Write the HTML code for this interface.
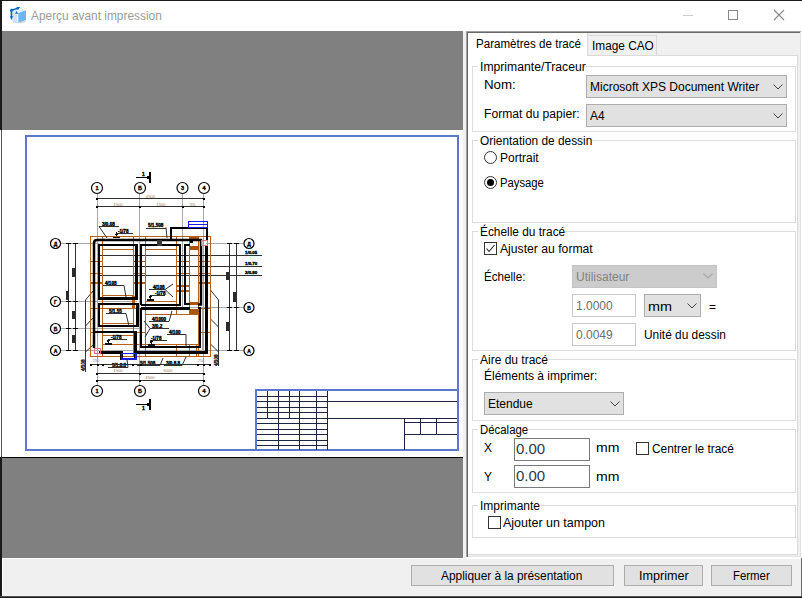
<!DOCTYPE html>
<html><head><meta charset="utf-8">
<style>
html,body{margin:0;padding:0;}
body{width:802px;height:598px;overflow:hidden;position:relative;background:#f0f0f0;font-family:"Liberation Sans",sans-serif;}
.a{position:absolute;box-sizing:border-box;}
.t{position:absolute;font-size:12px;line-height:14px;white-space:nowrap;color:#000;transform-origin:0 0;}
.grp{position:absolute;box-sizing:border-box;border:1px solid #dcdcdc;}
.cb{position:absolute;box-sizing:border-box;background:#e1e1e1;border:1px solid #adadad;}
.chev{position:absolute;width:10px;height:6px;}
.box{position:absolute;box-sizing:border-box;width:13px;height:13px;border:1px solid #333;background:#fff;}
</style></head><body>
<!-- window frame -->
<div class="a" style="left:0;top:0;width:802px;height:1px;background:#1a1a1a"></div>
<div class="a" style="left:0;top:1px;width:802px;height:30px;background:#fff"></div>
<div class="a" style="left:0;top:0;width:2px;height:598px;background:#1a1a1a"></div>
<!-- title icon -->
<svg class="a" style="left:6px;top:4px" width="24" height="22" viewBox="6 4 24 22">
 <ellipse cx="19" cy="21.5" rx="7" ry="1.6" fill="#d8d8d8"/>
 <polygon points="17.8,13 26,10 26,20 17.8,22.5" fill="#6cb6f7"/>
 <polygon points="12,11 17.8,13 17.8,22.5 12,20.3" fill="#cfe6fd"/>
 <polygon points="12,11 20,8.2 26,10 17.8,13" fill="#e8f4ff"/>
 <line x1="17.8" y1="13" x2="17.8" y2="22.5" stroke="#fff" stroke-width="0.9"/>
 <path d="M11.5,10.2 L18,8.3 M11.4,10.2 L11.4,17" stroke="#0b63c9" stroke-width="1.5" fill="none"/>
 <circle cx="11.6" cy="10.2" r="1.5" fill="#0b63c9"/>
 <polygon points="9.8,16.3 13.1,16.3 11.4,20" fill="#0b63c9"/>
 <polygon points="15,13.8 18.1,13.8 16.6,10.9" fill="#0b63c9"/>
 <polygon points="16.4,6.9 20.3,7.1 17.9,9.9" fill="#0b63c9"/>
</svg>
<div class="t" style="left:31px;top:9px;color:#9c9c9c;transform:scaleX(0.99)">Aperçu avant impression</div>
<!-- window buttons -->
<div class="a" style="left:683px;top:15px;width:10px;height:1px;background:#d0d0d0"></div>
<div class="a" style="left:728px;top:10px;width:10px;height:10px;border:1px solid #8a8a8a"></div>
<svg class="a" style="left:773px;top:9px" width="12" height="12" viewBox="0 0 12 12"><path d="M1,1 L11,11 M11,1 L1,11" stroke="#8a8a8a" stroke-width="1.1"/></svg>

<!-- preview area -->
<div class="a" style="left:2px;top:31px;width:461px;height:99px;background:#808080"></div>
<div class="a" style="left:2px;top:130px;width:461px;height:327px;background:#fff"></div>
<div class="a" style="left:2px;top:457px;width:461px;height:1px;background:#000"></div>
<div class="a" style="left:2px;top:458px;width:461px;height:100px;background:#808080"></div>
<div class="a" style="left:1px;top:130px;width:1px;height:327px;background:#555"></div>
<div class="a" style="left:0px;top:130px;width:1px;height:327px;background:#fff"></div>
<!-- paper border -->
<div class="a" style="left:25px;top:135px;width:434px;height:316px;border:2px solid #5a78cc"></div>

<!-- drawing -->
<svg class="a" style="left:2px;top:130px" width="461" height="327" viewBox="2 130 461 327" shape-rendering="crispEdges">
<line x1="97.5" y1="193.5" x2="97.5" y2="386" stroke="#a8a8a8" stroke-width="1"/>
<line x1="139.5" y1="193.5" x2="139.5" y2="386" stroke="#a8a8a8" stroke-width="1"/>
<line x1="203.5" y1="193.5" x2="203.5" y2="386" stroke="#a8a8a8" stroke-width="1"/>
<line x1="182.5" y1="193.5" x2="182.5" y2="307" stroke="#a8a8a8" stroke-width="1"/>
<line x1="61" y1="243.5" x2="99" y2="243.5" stroke="#a8a8a8" stroke-width="1"/>
<line x1="206" y1="243.5" x2="244" y2="243.5" stroke="#a8a8a8" stroke-width="1"/>
<line x1="61" y1="301.5" x2="137" y2="301.5" stroke="#a8a8a8" stroke-width="1"/>
<line x1="61" y1="328.5" x2="142" y2="328.5" stroke="#a8a8a8" stroke-width="1"/>
<line x1="61" y1="350.5" x2="244" y2="350.5" stroke="#a8a8a8" stroke-width="1"/>
<line x1="142" y1="307.5" x2="244" y2="307.5" stroke="#a8a8a8" stroke-width="1"/>
<line x1="202.5" y1="307" x2="202.5" y2="352" stroke="#a8a8a8" stroke-width="1"/>
<line x1="96" y1="198.5" x2="205" y2="198.5" stroke="#303030" stroke-width="1"/>
<line x1="96" y1="206.5" x2="205" y2="206.5" stroke="#303030" stroke-width="1"/>
<rect x="96" y="205.5" width="2" height="2" fill="#000"/>
<rect x="139" y="205.5" width="2" height="2" fill="#000"/>
<rect x="181.5" y="205.5" width="2" height="2" fill="#000"/>
<rect x="203" y="205.5" width="2" height="2" fill="#000"/>
<rect x="96" y="197.5" width="2" height="2" fill="#000"/>
<rect x="203" y="197.5" width="2" height="2" fill="#000"/>
<text x="150.5" y="197.5" font-family="Liberation Sans" font-size="4.2" font-weight="normal" fill="#a08060" text-anchor="middle">4500</text>
<text x="118" y="205.5" font-family="Liberation Sans" font-size="4.2" font-weight="normal" fill="#a08060" text-anchor="middle">1500</text>
<text x="161" y="205.5" font-family="Liberation Sans" font-size="4.2" font-weight="normal" fill="#a08060" text-anchor="middle">1500</text>
<text x="192.5" y="205.5" font-family="Liberation Sans" font-size="4.2" font-weight="normal" fill="#a08060" text-anchor="middle">3/5</text>
<line x1="136" y1="177.5" x2="149" y2="177.5" stroke="#000" stroke-width="1"/>
<rect x="149" y="172" width="2" height="11" fill="#000"/>
<text x="142" y="176" font-family="Liberation Sans" font-size="5" font-weight="bold" fill="#000" text-anchor="start" stroke="#000" stroke-width="0.35">1</text>
<rect x="147" y="176" width="2" height="3" fill="#000"/>
<circle cx="97" cy="188" r="5.5" stroke="#000" stroke-width="1.2" fill="#fff" shape-rendering="auto"/>
<text x="97" y="190" font-family="Liberation Sans" font-size="5.5" font-weight="bold" fill="#000" text-anchor="middle" stroke="#000" stroke-width="0.35">1</text>
<circle cx="140" cy="188" r="5.5" stroke="#000" stroke-width="1.2" fill="#fff" shape-rendering="auto"/>
<text x="140" y="190" font-family="Liberation Sans" font-size="5.5" font-weight="bold" fill="#000" text-anchor="middle" stroke="#000" stroke-width="0.35">Б</text>
<circle cx="182.5" cy="188" r="5.5" stroke="#000" stroke-width="1.2" fill="#fff" shape-rendering="auto"/>
<text x="182.5" y="190" font-family="Liberation Sans" font-size="5.5" font-weight="bold" fill="#000" text-anchor="middle" stroke="#000" stroke-width="0.35">3</text>
<circle cx="204" cy="188" r="5.5" stroke="#000" stroke-width="1.2" fill="#fff" shape-rendering="auto"/>
<text x="204" y="190" font-family="Liberation Sans" font-size="5.5" font-weight="bold" fill="#000" text-anchor="middle" stroke="#000" stroke-width="0.35">4</text>
<line x1="68.5" y1="243" x2="68.5" y2="351" stroke="#303030" stroke-width="1"/>
<line x1="75.5" y1="243" x2="75.5" y2="351" stroke="#303030" stroke-width="1"/>
<line x1="66" y1="243.5" x2="71" y2="243.5" stroke="#000" stroke-width="1"/>
<line x1="73" y1="243.5" x2="78" y2="243.5" stroke="#000" stroke-width="1"/>
<line x1="66" y1="301.5" x2="71" y2="301.5" stroke="#000" stroke-width="1"/>
<line x1="73" y1="301.5" x2="78" y2="301.5" stroke="#000" stroke-width="1"/>
<line x1="66" y1="328.5" x2="71" y2="328.5" stroke="#000" stroke-width="1"/>
<line x1="73" y1="328.5" x2="78" y2="328.5" stroke="#000" stroke-width="1"/>
<line x1="66" y1="350.5" x2="71" y2="350.5" stroke="#000" stroke-width="1"/>
<line x1="73" y1="350.5" x2="78" y2="350.5" stroke="#000" stroke-width="1"/>
<rect x="72" y="268" width="3" height="9" fill="#2a2a2a"/>
<rect x="65.5" y="291" width="3" height="9" fill="#2a2a2a"/>
<rect x="72" y="311" width="3" height="8" fill="#2a2a2a"/>
<rect x="72" y="335" width="3" height="8" fill="#2a2a2a"/>
<circle cx="55.5" cy="243.5" r="5" stroke="#000" stroke-width="1.2" fill="#fff" shape-rendering="auto"/>
<text x="55.5" y="245.5" font-family="Liberation Sans" font-size="5" font-weight="bold" fill="#000" text-anchor="middle" stroke="#000" stroke-width="0.35">Д</text>
<circle cx="55.5" cy="301.5" r="5" stroke="#000" stroke-width="1.2" fill="#fff" shape-rendering="auto"/>
<text x="55.5" y="303.5" font-family="Liberation Sans" font-size="5" font-weight="bold" fill="#000" text-anchor="middle" stroke="#000" stroke-width="0.35">Г</text>
<circle cx="55.5" cy="328.5" r="5" stroke="#000" stroke-width="1.2" fill="#fff" shape-rendering="auto"/>
<text x="55.5" y="330.5" font-family="Liberation Sans" font-size="5" font-weight="bold" fill="#000" text-anchor="middle" stroke="#000" stroke-width="0.35">Б</text>
<circle cx="55.5" cy="350.5" r="5" stroke="#000" stroke-width="1.2" fill="#fff" shape-rendering="auto"/>
<text x="55.5" y="352.5" font-family="Liberation Sans" font-size="5" font-weight="bold" fill="#000" text-anchor="middle" stroke="#000" stroke-width="0.35">А</text>
<line x1="85.5" y1="300" x2="85.5" y2="372" stroke="#303030" stroke-width="1"/>
<path d="M85.5,300 L93,291 M85.5,326 L93,318 M85.5,352 L93,345" stroke="#303030" stroke-width="1" fill="none" shape-rendering="auto"/>
<text x="85" y="371" font-family="Liberation Sans" font-size="4.6" font-weight="bold" fill="#1a1a1a" text-anchor="start" transform="rotate(-90 85 371)" stroke="#1a1a1a" stroke-width="0.35">4/108</text>
<line x1="229.5" y1="243" x2="229.5" y2="351" stroke="#303030" stroke-width="1"/>
<line x1="236.5" y1="243" x2="236.5" y2="351" stroke="#303030" stroke-width="1"/>
<line x1="227" y1="243.5" x2="232" y2="243.5" stroke="#000" stroke-width="1"/>
<line x1="234" y1="243.5" x2="239" y2="243.5" stroke="#000" stroke-width="1"/>
<line x1="227" y1="307.5" x2="232" y2="307.5" stroke="#000" stroke-width="1"/>
<line x1="234" y1="307.5" x2="239" y2="307.5" stroke="#000" stroke-width="1"/>
<line x1="227" y1="350.5" x2="232" y2="350.5" stroke="#000" stroke-width="1"/>
<line x1="234" y1="350.5" x2="239" y2="350.5" stroke="#000" stroke-width="1"/>
<rect x="226" y="272" width="3" height="8" fill="#2a2a2a"/>
<rect x="233" y="292" width="3" height="10" fill="#2a2a2a"/>
<rect x="226" y="322" width="3" height="9" fill="#2a2a2a"/>
<circle cx="249" cy="243.5" r="5" stroke="#000" stroke-width="1.2" fill="#fff" shape-rendering="auto"/>
<text x="249" y="245.5" font-family="Liberation Sans" font-size="5" font-weight="bold" fill="#000" text-anchor="middle" stroke="#000" stroke-width="0.35">Д</text>
<circle cx="249" cy="307.5" r="5" stroke="#000" stroke-width="1.2" fill="#fff" shape-rendering="auto"/>
<text x="249" y="309.5" font-family="Liberation Sans" font-size="5" font-weight="bold" fill="#000" text-anchor="middle" stroke="#000" stroke-width="0.35">В</text>
<circle cx="249" cy="350.5" r="5" stroke="#000" stroke-width="1.2" fill="#fff" shape-rendering="auto"/>
<text x="249" y="352.5" font-family="Liberation Sans" font-size="5" font-weight="bold" fill="#000" text-anchor="middle" stroke="#000" stroke-width="0.35">А</text>
<line x1="98" y1="255.5" x2="262" y2="255.5" stroke="#303030" stroke-width="1"/>
<line x1="98" y1="266.5" x2="262" y2="266.5" stroke="#303030" stroke-width="1"/>
<line x1="98" y1="275.5" x2="262" y2="275.5" stroke="#303030" stroke-width="1"/>
<text x="245" y="254" font-family="Liberation Sans" font-size="4.4" font-weight="bold" fill="#000" text-anchor="start" stroke="#000" stroke-width="0.35">1/0.05</text>
<text x="245" y="265" font-family="Liberation Sans" font-size="4.4" font-weight="bold" fill="#000" text-anchor="start" stroke="#000" stroke-width="0.35">1/0.70</text>
<text x="245" y="274" font-family="Liberation Sans" font-size="4.4" font-weight="bold" fill="#000" text-anchor="start" stroke="#000" stroke-width="0.35">3/0.80</text>
<line x1="218.5" y1="300" x2="218.5" y2="366" stroke="#303030" stroke-width="1"/>
<path d="M210.5,290 L218.5,300 M210.5,319 L218.5,327 M210.5,344 L218.5,352" stroke="#303030" stroke-width="1" fill="none" shape-rendering="auto"/>
<text x="218" y="366" font-family="Liberation Sans" font-size="4.6" font-weight="bold" fill="#1a1a1a" text-anchor="start" transform="rotate(-90 218 366)" stroke="#1a1a1a" stroke-width="0.35">4/108</text>
<rect x="90.5" y="236.5" width="120" height="120" stroke="#b5611c" stroke-width="1" fill="none"/>
<line x1="102.5" y1="236.5" x2="102.5" y2="356.5" stroke="#b5611c" stroke-width="1"/>
<line x1="133.5" y1="236.5" x2="133.5" y2="356.5" stroke="#b5611c" stroke-width="1"/>
<line x1="145.5" y1="236.5" x2="145.5" y2="356.5" stroke="#b5611c" stroke-width="1"/>
<line x1="198.5" y1="236.5" x2="198.5" y2="356.5" stroke="#b5611c" stroke-width="1"/>
<line x1="176.5" y1="236.5" x2="176.5" y2="314.5" stroke="#b5611c" stroke-width="1"/>
<line x1="189.5" y1="236.5" x2="189.5" y2="314.5" stroke="#b5611c" stroke-width="1"/>
<line x1="176.5" y1="344.5" x2="176.5" y2="356.5" stroke="#b5611c" stroke-width="1"/>
<line x1="189.5" y1="344.5" x2="189.5" y2="356.5" stroke="#b5611c" stroke-width="1"/>
<line x1="196.5" y1="344.5" x2="196.5" y2="356.5" stroke="#b5611c" stroke-width="1"/>
<line x1="102.5" y1="249.5" x2="133.5" y2="249.5" stroke="#b5611c" stroke-width="1"/>
<line x1="145.5" y1="249.5" x2="176.5" y2="249.5" stroke="#b5611c" stroke-width="1"/>
<line x1="90.5" y1="261.5" x2="102.5" y2="261.5" stroke="#b5611c" stroke-width="1"/>
<line x1="90.5" y1="273.5" x2="102.5" y2="273.5" stroke="#b5611c" stroke-width="1"/>
<rect x="90.5" y="281.5" width="12.0" height="2.5" fill="#b5611c"/>
<line x1="133.5" y1="261.5" x2="145.5" y2="261.5" stroke="#b5611c" stroke-width="1"/>
<line x1="133.5" y1="273.5" x2="145.5" y2="273.5" stroke="#b5611c" stroke-width="1"/>
<rect x="133.5" y="281.5" width="12.0" height="2.5" fill="#b5611c"/>
<line x1="198.5" y1="261.5" x2="210.5" y2="261.5" stroke="#b5611c" stroke-width="1"/>
<line x1="198.5" y1="273.5" x2="210.5" y2="273.5" stroke="#b5611c" stroke-width="1"/>
<rect x="198.5" y="281.5" width="12.0" height="2.5" fill="#b5611c"/>
<line x1="176.5" y1="261.5" x2="189.5" y2="261.5" stroke="#b5611c" stroke-width="1"/>
<line x1="176.5" y1="273.5" x2="189.5" y2="273.5" stroke="#b5611c" stroke-width="1"/>
<rect x="176.5" y="284.5" width="13" height="2" fill="#b5611c"/>
<rect x="176.5" y="289.5" width="13" height="2" fill="#b5611c"/>
<line x1="102.5" y1="295.5" x2="133.5" y2="295.5" stroke="#b5611c" stroke-width="1"/>
<line x1="90.5" y1="308.5" x2="145.5" y2="308.5" stroke="#b5611c" stroke-width="1"/>
<line x1="198.5" y1="308.5" x2="210.5" y2="308.5" stroke="#b5611c" stroke-width="1"/>
<line x1="145.5" y1="301.5" x2="176.5" y2="301.5" stroke="#b5611c" stroke-width="1"/>
<line x1="145.5" y1="314.5" x2="198.5" y2="314.5" stroke="#b5611c" stroke-width="1"/>
<line x1="102.5" y1="323.5" x2="133.5" y2="323.5" stroke="#b5611c" stroke-width="1"/>
<line x1="90.5" y1="332.5" x2="145.5" y2="332.5" stroke="#b5611c" stroke-width="1"/>
<line x1="198.5" y1="332.5" x2="210.5" y2="332.5" stroke="#b5611c" stroke-width="1"/>
<line x1="102.5" y1="335.5" x2="133.5" y2="335.5" stroke="#b5611c" stroke-width="1"/>
<line x1="102.5" y1="344.5" x2="198.5" y2="344.5" stroke="#b5611c" stroke-width="1"/>
<rect x="132" y="296" width="2.5" height="12" fill="#b5611c"/>
<rect x="189.5" y="236.5" width="9" height="3" fill="#a8560f"/>
<rect x="189.5" y="246" width="9" height="3.5" fill="#a8560f"/>
<rect x="189.5" y="301.5" width="9" height="3.5" fill="#a8560f"/>
<rect x="189.5" y="309" width="9" height="4.5" fill="#a8560f"/>
<path d="M94,348 L94,243 Q94,240 97,240 L201,240 L201,304.5 L198,304.5" stroke="#000" stroke-width="2.5" fill="none" shape-rendering="auto"/>
<path d="M206.5,245 L206.5,352.5 L137,352.5" stroke="#000" stroke-width="3" fill="none"/>
<path d="M121.5,359.5 L121.5,352.5 L99,352.5" stroke="#000" stroke-width="2.5" fill="none"/>
<path d="M94,332 L135.7,332 L135.7,360" stroke="#000" stroke-width="2.5" fill="none"/>
<rect x="99" y="245" width="37.6" height="53.6" stroke="#000" stroke-width="2.5" fill="none"/>
<path d="M141,305 L141,245 L180,245 L180,305 L141,305" stroke="#000" stroke-width="2.5" fill="none"/>
<path d="M189.5,245 L185,245 L185,304 L190,304" stroke="#000" stroke-width="2.5" fill="none"/>
<rect x="189.5" y="239.5" width="3.5" height="3" fill="#000"/>
<path d="M141,308.6 L190,308.6" stroke="#000" stroke-width="3" fill="none"/>
<rect x="99" y="304" width="38.5" height="22" stroke="#000" stroke-width="2.5" fill="none"/>
<path d="M141,308 L141,347 L200,347 L200,308 L198,308" stroke="#000" stroke-width="2.5" fill="none"/>
<path d="M171,240 L171,228 L207,228 L207,240" stroke="#000" stroke-width="2" fill="none"/>
<rect x="157" y="240" width="4.5" height="6" fill="#3a3a3a"/>
<rect x="188.5" y="221.5" width="19" height="6" stroke="#1a1aee" stroke-width="1.2" fill="none"/>
<line x1="188.5" y1="224.5" x2="207.5" y2="224.5" stroke="#1a1aee" stroke-width="1.2"/>
<rect x="121.5" y="353.5" width="14.5" height="5.5" stroke="#1a1aee" stroke-width="1.2" fill="none"/>
<rect x="201.5" y="240.5" width="6" height="5" stroke="#e07080" stroke-width="1" fill="none"/>
<rect x="94.5" y="348.5" width="5.5" height="5" stroke="#e07080" stroke-width="1" fill="none"/>
<text x="102" y="225.5" font-family="Liberation Sans" font-size="4.6" font-weight="bold" fill="#000" text-anchor="start" stroke="#000" stroke-width="0.35">3/0.08</text>
<line x1="99" y1="226.5" x2="119" y2="226.5" stroke="#303030" stroke-width="1"/>
<path d="M99,226.5 L107,238" stroke="#303030" stroke-width="1" fill="none" shape-rendering="auto"/>
<text x="118" y="232.5" font-family="Liberation Sans" font-size="4.6" font-weight="bold" fill="#000" text-anchor="start" stroke="#000" stroke-width="0.35">-1/78</text>
<line x1="116" y1="233.5" x2="133" y2="233.5" stroke="#303030" stroke-width="1"/>
<rect x="113" y="236.5" width="7" height="1.5" fill="#111"/>
<path d="M114.5,233.5 L118.5,233.5 L116.5,236.5 Z" fill="#111"/>
<line x1="116.5" y1="232.0" x2="116.5" y2="233.5" stroke="#111" stroke-width="1"/>
<text x="148" y="227.0" font-family="Liberation Sans" font-size="4.6" font-weight="bold" fill="#000" text-anchor="start" stroke="#000" stroke-width="0.35">5/1.508</text>
<line x1="146" y1="228.0" x2="166" y2="228.0" stroke="#303030" stroke-width="1"/>
<path d="M166,227.5 L167,238" stroke="#303030" stroke-width="1" fill="none" shape-rendering="auto"/>
<text x="105" y="284.5" font-family="Liberation Sans" font-size="4.6" font-weight="bold" fill="#000" text-anchor="start" stroke="#000" stroke-width="0.35">4/108</text>
<line x1="103" y1="285.5" x2="124" y2="285.5" stroke="#303030" stroke-width="1"/>
<path d="M124,285.5 L126,297" stroke="#303030" stroke-width="1" fill="none" shape-rendering="auto"/>
<text x="109" y="312.5" font-family="Liberation Sans" font-size="4.6" font-weight="bold" fill="#000" text-anchor="start" stroke="#000" stroke-width="0.35">5/1.55</text>
<line x1="106" y1="313.5" x2="126" y2="313.5" stroke="#303030" stroke-width="1"/>
<path d="M126,313.5 L129,326" stroke="#303030" stroke-width="1" fill="none" shape-rendering="auto"/>
<text x="153" y="288.5" font-family="Liberation Sans" font-size="4.6" font-weight="bold" fill="#000" text-anchor="start" stroke="#000" stroke-width="0.35">4/108</text>
<line x1="149" y1="289.5" x2="165" y2="289.5" stroke="#303030" stroke-width="1"/>
<path d="M165,289.5 L173,284 M165,289.5 L173,297" stroke="#303030" stroke-width="1" fill="none" shape-rendering="auto"/>
<text x="155" y="294.5" font-family="Liberation Sans" font-size="4.6" font-weight="bold" fill="#000" text-anchor="start" stroke="#000" stroke-width="0.35">-1/78</text>
<line x1="151" y1="295.5" x2="165" y2="295.5" stroke="#303030" stroke-width="1"/>
<rect x="147" y="299" width="7" height="1.5" fill="#111"/>
<path d="M148.5,296 L152.5,296 L150.5,299 Z" fill="#111"/>
<line x1="150.5" y1="294.5" x2="150.5" y2="296" stroke="#111" stroke-width="1"/>
<text x="111" y="338.5" font-family="Liberation Sans" font-size="4.6" font-weight="bold" fill="#000" text-anchor="start" stroke="#000" stroke-width="0.35">-1/78</text>
<line x1="108" y1="339.5" x2="127" y2="339.5" stroke="#303030" stroke-width="1"/>
<rect x="105" y="343" width="7" height="1.5" fill="#111"/>
<path d="M106.5,340 L110.5,340 L108.5,343 Z" fill="#111"/>
<line x1="108.5" y1="338.5" x2="108.5" y2="340" stroke="#111" stroke-width="1"/>
<text x="152" y="320.5" font-family="Liberation Sans" font-size="4.6" font-weight="bold" fill="#000" text-anchor="start" stroke="#000" stroke-width="0.35">4/1000</text>
<line x1="149" y1="321.5" x2="169" y2="321.5" stroke="#303030" stroke-width="1"/>
<path d="M169,321.5 L172,311" stroke="#303030" stroke-width="1" fill="none" shape-rendering="auto"/>
<text x="152" y="327.5" font-family="Liberation Sans" font-size="4.6" font-weight="bold" fill="#000" text-anchor="start" stroke="#000" stroke-width="0.35">3/0.2</text>
<line x1="150" y1="328.5" x2="169" y2="328.5" stroke="#303030" stroke-width="1"/>
<path d="M150,328.5 L144,321 M150,328.5 L145,337" stroke="#303030" stroke-width="1" fill="none" shape-rendering="auto"/>
<text x="169" y="333.5" font-family="Liberation Sans" font-size="4.6" font-weight="bold" fill="#000" text-anchor="start" stroke="#000" stroke-width="0.35">4/100</text>
<line x1="167" y1="334.5" x2="186" y2="334.5" stroke="#303030" stroke-width="1"/>
<path d="M186,334.5 L186,347" stroke="#303030" stroke-width="1" fill="none" shape-rendering="auto"/>
<text x="151" y="339.5" font-family="Liberation Sans" font-size="4.6" font-weight="bold" fill="#000" text-anchor="start" stroke="#000" stroke-width="0.35">-1/78</text>
<line x1="150" y1="340.5" x2="167" y2="340.5" stroke="#303030" stroke-width="1"/>
<rect x="148" y="344" width="7" height="1.5" fill="#111"/>
<path d="M149.5,341 L153.5,341 L151.5,344 Z" fill="#111"/>
<line x1="151.5" y1="339.5" x2="151.5" y2="341" stroke="#111" stroke-width="1"/>
<text x="140" y="364.5" font-family="Liberation Sans" font-size="4.6" font-weight="bold" fill="#000" text-anchor="start" stroke="#000" stroke-width="0.35">5/1.508</text>
<line x1="137" y1="365.5" x2="160" y2="365.5" stroke="#303030" stroke-width="1"/>
<path d="M160,365.5 L163,358" stroke="#303030" stroke-width="1" fill="none" shape-rendering="auto"/>
<text x="166" y="364.5" font-family="Liberation Sans" font-size="4.6" font-weight="bold" fill="#000" text-anchor="start" stroke="#000" stroke-width="0.35">3/0.8.8</text>
<line x1="164" y1="365.5" x2="182" y2="365.5" stroke="#303030" stroke-width="1"/>
<path d="M182,365.5 L186,357" stroke="#303030" stroke-width="1" fill="none" shape-rendering="auto"/>
<text x="112" y="366.5" font-family="Liberation Sans" font-size="4.6" font-weight="bold" fill="#000" text-anchor="start" stroke="#000" stroke-width="0.35">3/1.8.8</text>
<line x1="108" y1="367.5" x2="128" y2="367.5" stroke="#303030" stroke-width="1"/>
<path d="M128,367.5 L127,359" stroke="#303030" stroke-width="1" fill="none" shape-rendering="auto"/>
<line x1="91" y1="364.5" x2="210" y2="364.5" stroke="#303030" stroke-width="1"/>
<rect x="89.5" y="363.5" width="2" height="2" fill="#000"/>
<rect x="96.5" y="363.5" width="2" height="2" fill="#000"/>
<rect x="101.5" y="363.5" width="2" height="2" fill="#000"/>
<rect x="132" y="363.5" width="2" height="2" fill="#000"/>
<rect x="140" y="363.5" width="2" height="2" fill="#000"/>
<rect x="197" y="363.5" width="2" height="2" fill="#000"/>
<rect x="203" y="363.5" width="2" height="2" fill="#000"/>
<rect x="209" y="363.5" width="2" height="2" fill="#000"/>
<line x1="96" y1="373.5" x2="205" y2="373.5" stroke="#303030" stroke-width="1"/>
<line x1="96" y1="380.5" x2="205" y2="380.5" stroke="#303030" stroke-width="1"/>
<rect x="96" y="372.5" width="2" height="2" fill="#000"/>
<rect x="96" y="379.5" width="2" height="2" fill="#000"/>
<rect x="139" y="372.5" width="2" height="2" fill="#000"/>
<rect x="139" y="379.5" width="2" height="2" fill="#000"/>
<rect x="203" y="372.5" width="2" height="2" fill="#000"/>
<rect x="203" y="379.5" width="2" height="2" fill="#000"/>
<text x="118" y="372" font-family="Liberation Sans" font-size="4.2" font-weight="normal" fill="#a08060" text-anchor="middle">1500</text>
<text x="168" y="372" font-family="Liberation Sans" font-size="4.2" font-weight="normal" fill="#a08060" text-anchor="middle">3000</text>
<text x="150" y="379" font-family="Liberation Sans" font-size="4.2" font-weight="normal" fill="#a08060" text-anchor="middle">4500</text>
<text x="96" y="362" font-family="Liberation Sans" font-size="4" font-weight="normal" fill="#8090b0" text-anchor="middle">250</text>
<text x="201" y="362" font-family="Liberation Sans" font-size="4" font-weight="normal" fill="#8090b0" text-anchor="middle">250</text>
<circle cx="97" cy="391" r="5.5" stroke="#000" stroke-width="1.2" fill="#fff" shape-rendering="auto"/>
<text x="97" y="393" font-family="Liberation Sans" font-size="5.5" font-weight="bold" fill="#000" text-anchor="middle" stroke="#000" stroke-width="0.35">1</text>
<circle cx="140" cy="391" r="5.5" stroke="#000" stroke-width="1.2" fill="#fff" shape-rendering="auto"/>
<text x="140" y="393" font-family="Liberation Sans" font-size="5.5" font-weight="bold" fill="#000" text-anchor="middle" stroke="#000" stroke-width="0.35">Б</text>
<circle cx="204" cy="391" r="5.5" stroke="#000" stroke-width="1.2" fill="#fff" shape-rendering="auto"/>
<text x="204" y="393" font-family="Liberation Sans" font-size="5.5" font-weight="bold" fill="#000" text-anchor="middle" stroke="#000" stroke-width="0.35">4</text>
<line x1="136" y1="404.5" x2="149" y2="404.5" stroke="#000" stroke-width="1"/>
<rect x="149" y="399" width="2" height="11" fill="#000"/>
<text x="142" y="410" font-family="Liberation Sans" font-size="5" font-weight="bold" fill="#000" text-anchor="start" stroke="#000" stroke-width="0.35">1</text>
<rect x="147" y="403" width="2" height="3" fill="#000"/>
<line x1="257" y1="396.5" x2="328" y2="396.5" stroke="#1c2440" stroke-width="1"/>
<line x1="257" y1="401.5" x2="328" y2="401.5" stroke="#1c2440" stroke-width="1"/>
<line x1="257" y1="407.5" x2="328" y2="407.5" stroke="#1c2440" stroke-width="1"/>
<line x1="257" y1="412.5" x2="328" y2="412.5" stroke="#1c2440" stroke-width="1"/>
<line x1="257" y1="418.5" x2="328" y2="418.5" stroke="#1c2440" stroke-width="1"/>
<line x1="257" y1="423.5" x2="328" y2="423.5" stroke="#1c2440" stroke-width="1"/>
<line x1="257" y1="429.5" x2="328" y2="429.5" stroke="#1c2440" stroke-width="1"/>
<line x1="257" y1="434.5" x2="328" y2="434.5" stroke="#1c2440" stroke-width="1"/>
<line x1="257" y1="440.5" x2="328" y2="440.5" stroke="#1c2440" stroke-width="1"/>
<line x1="257" y1="445.5" x2="328" y2="445.5" stroke="#1c2440" stroke-width="1"/>
<line x1="267.5" y1="390" x2="267.5" y2="418.5" stroke="#1c2440" stroke-width="1"/>
<line x1="289.5" y1="390" x2="289.5" y2="418.5" stroke="#1c2440" stroke-width="1"/>
<line x1="278.5" y1="390" x2="278.5" y2="450" stroke="#1c2440" stroke-width="1"/>
<line x1="299.5" y1="390" x2="299.5" y2="450" stroke="#1c2440" stroke-width="1"/>
<line x1="316.5" y1="390" x2="316.5" y2="450" stroke="#1c2440" stroke-width="1"/>
<line x1="327.5" y1="390" x2="327.5" y2="450" stroke="#1c2440" stroke-width="1"/>
<line x1="328" y1="401.5" x2="457" y2="401.5" stroke="#1c2440" stroke-width="1"/>
<line x1="328" y1="418.5" x2="457" y2="418.5" stroke="#1c2440" stroke-width="1"/>
<line x1="404.5" y1="434.5" x2="457" y2="434.5" stroke="#1c2440" stroke-width="1"/>
<line x1="404.5" y1="418.5" x2="404.5" y2="450" stroke="#1c2440" stroke-width="1"/>
<line x1="420.5" y1="418.5" x2="420.5" y2="434.5" stroke="#1c2440" stroke-width="1"/>
<line x1="436.5" y1="418.5" x2="436.5" y2="434.5" stroke="#1c2440" stroke-width="1"/>
<line x1="404.5" y1="422.5" x2="457" y2="422.5" stroke="#1c2440" stroke-width="1"/>
<path d="M256,450 L256,390 L458,390" stroke="#5a78cc" stroke-width="2" fill="none"/>
</svg>

<!-- splitter / right panel frame -->
<div class="a" style="left:463px;top:31px;width:3px;height:527px;background:#f0f0f0"></div>
<div class="a" style="left:466px;top:31px;width:336px;height:527px;background:#f0f0f0"></div>
<div class="a" style="left:466px;top:31px;width:335px;height:1px;background:#a0a0a0"></div>
<div class="a" style="left:466px;top:32px;width:334px;height:1px;background:#696969"></div>
<div class="a" style="left:466px;top:31px;width:1px;height:527px;background:#a0a0a0"></div>
<div class="a" style="left:467px;top:32px;width:1px;height:525px;background:#696969"></div>
<div class="a" style="left:800px;top:33px;width:1px;height:524px;background:#e3e3e3"></div>
<div class="a" style="left:801px;top:31px;width:1px;height:527px;background:#fff"></div>
<div class="a" style="left:468px;top:556px;width:333px;height:1px;background:#e3e3e3"></div>
<div class="a" style="left:466px;top:557px;width:336px;height:1px;background:#fff"></div>

<!-- tab page -->
<div class="a" style="left:468px;top:55px;width:330px;height:500px;background:#fff;border:1px solid #dadada;border-left:none"></div>
<!-- selected tab -->
<div class="a" style="left:468px;top:33px;width:120px;height:23px;background:#fff;border-right:1px solid #dadada"></div>
<!-- inactive tab -->
<div class="a" style="left:587px;top:35px;width:70px;height:21px;background:#f0f0f0;border:1px solid #dadada"></div>
<div class="t" style="left:476px;top:37px;transform:scaleX(0.965)">Paramètres de tracé</div>
<div class="t" style="left:592px;top:39px;transform:scaleX(0.985)">Image CAO</div>

<!-- group: Imprimante/Traceur -->
<div class="grp" style="left:472px;top:66px;width:324px;height:66px"></div>
<div class="a" style="left:478px;top:60px;width:108px;height:12px;background:#fff"></div>
<div class="t" style="left:480px;top:60px;transform:scaleX(1.015)">Imprimante/Traceur</div>
<div class="t" style="left:484px;top:78px;transform:scaleX(1.11)">Nom:</div>
<div class="t" style="left:484px;top:107px;transform:scaleX(1.01)">Format du papier:</div>
<div class="cb" style="left:586px;top:75px;width:201px;height:23px"></div>
<div class="t" style="left:590px;top:80px;transform:scaleX(1.0)">Microsoft XPS Document Writer</div>
<svg class="chev" style="left:773px;top:84px" viewBox="0 0 10 6"><path d="M0.5,0.5 L5,5 L9.5,0.5" stroke="#444" stroke-width="1" fill="none"/></svg>
<div class="cb" style="left:586px;top:104px;width:201px;height:23px"></div>
<div class="t" style="left:590px;top:109px">A4</div>
<svg class="chev" style="left:773px;top:113px" viewBox="0 0 10 6"><path d="M0.5,0.5 L5,5 L9.5,0.5" stroke="#444" stroke-width="1" fill="none"/></svg>

<!-- group: Orientation -->
<div class="grp" style="left:472px;top:140px;width:324px;height:83px"></div>
<div class="a" style="left:478px;top:134px;width:114px;height:12px;background:#fff"></div>
<div class="t" style="left:480px;top:134px;transform:scaleX(0.99)">Orientation de dessin</div>
<div class="a" style="left:484px;top:151px;width:13px;height:13px;border:1px solid #333;border-radius:50%;background:#fff"></div>
<div class="t" style="left:500px;top:151px">Portrait</div>
<div class="a" style="left:484px;top:176px;width:13px;height:13px;border:1px solid #333;border-radius:50%;background:#fff"></div>
<div class="a" style="left:487px;top:179px;width:7px;height:7px;border-radius:50%;background:#000"></div>
<div class="t" style="left:500px;top:176px;transform:scaleX(0.94)">Paysage</div>

<!-- group: Echelle -->
<div class="grp" style="left:472px;top:231px;width:324px;height:120px"></div>
<div class="a" style="left:478px;top:225px;width:87px;height:12px;background:#fff"></div>
<div class="t" style="left:480px;top:225px;transform:scaleX(0.99)">Échelle du tracé</div>
<div class="box" style="left:484px;top:242px"></div>
<svg class="a" style="left:485px;top:243px" width="11" height="11" viewBox="0 0 11 11"><path d="M1.5,5.5 L4,8.5 L9.5,2" stroke="#222" stroke-width="1.1" fill="none"/></svg>
<div class="t" style="left:500px;top:242px;transform:scaleX(1.015)">Ajuster au format</div>
<div class="t" style="left:484px;top:270px;transform:scaleX(0.97)">Échelle:</div>
<div class="a" style="left:572px;top:265px;width:145px;height:23px;background:#cccccc;border:1px solid #c4c4c4"></div>
<div class="t" style="left:576px;top:270px;color:#838383">Utilisateur</div>
<svg class="chev" style="left:703px;top:273px" viewBox="0 0 10 6"><path d="M0.5,0.5 L5,5 L9.5,0.5" stroke="#a8a8a8" stroke-width="1.1" fill="none"/></svg>
<div class="a" style="left:572px;top:294px;width:64px;height:23px;background:#fff;border:1px solid #c8c8c8"></div>
<div class="t" style="left:576px;top:299px;color:#6d6d6d">1.0000</div>
<div class="cb" style="left:644px;top:294px;width:57px;height:23px"></div>
<div class="t" style="left:648px;top:300px;transform:scaleX(1.2)">mm</div>
<svg class="chev" style="left:687px;top:303px" viewBox="0 0 10 6"><path d="M0.5,0.5 L5,5 L9.5,0.5" stroke="#444" stroke-width="1" fill="none"/></svg>
<div class="t" style="left:709px;top:300px">=</div>
<div class="a" style="left:572px;top:323px;width:64px;height:23px;background:#fff;border:1px solid #c8c8c8"></div>
<div class="t" style="left:576px;top:328px;color:#6d6d6d">0.0049</div>
<div class="t" style="left:644px;top:328px;transform:scaleX(0.99)">Unité du dessin</div>

<!-- group: Aire -->
<div class="grp" style="left:472px;top:359px;width:324px;height:62px"></div>
<div class="a" style="left:478px;top:353px;width:69px;height:12px;background:#fff"></div>
<div class="t" style="left:480px;top:353px;transform:scaleX(1.0)">Aire du tracé</div>
<div class="t" style="left:484px;top:369px;transform:scaleX(1.0)">Éléments à imprimer:</div>
<div class="cb" style="left:484px;top:392px;width:140px;height:23px"></div>
<div class="t" style="left:488px;top:397px">Etendue</div>
<svg class="chev" style="left:610px;top:401px" viewBox="0 0 10 6"><path d="M0.5,0.5 L5,5 L9.5,0.5" stroke="#444" stroke-width="1" fill="none"/></svg>

<!-- group: Decalage -->
<div class="grp" style="left:472px;top:429px;width:324px;height:64px"></div>
<div class="a" style="left:478px;top:423px;width:50px;height:12px;background:#fff"></div>
<div class="t" style="left:480px;top:423px;transform:scaleX(0.95)">Décalage</div>
<div class="t" style="left:484px;top:441px">X</div>
<div class="a" style="left:514px;top:438px;width:76px;height:23px;background:#fff;border:1px solid #7a7a7a"></div>
<div class="t" style="left:516px;top:440px;font-size:15px;line-height:17px;color:#2a3a4a">0.00</div>
<div class="t" style="left:596px;top:441px;transform:scaleX(1.17)">mm</div>
<div class="box" style="left:636px;top:442px"></div>
<div class="t" style="left:652px;top:442px;transform:scaleX(0.99)">Centrer le tracé</div>
<div class="t" style="left:484px;top:470px">Y</div>
<div class="a" style="left:514px;top:465px;width:76px;height:23px;background:#fff;border:1px solid #7a7a7a"></div>
<div class="t" style="left:516px;top:467px;font-size:15px;line-height:17px;color:#2a3a4a">0.00</div>
<div class="t" style="left:596px;top:470px;transform:scaleX(1.17)">mm</div>

<!-- group: Imprimante -->
<div class="grp" style="left:472px;top:505px;width:324px;height:33px"></div>
<div class="a" style="left:478px;top:499px;width:61px;height:12px;background:#fff"></div>
<div class="t" style="left:480px;top:499px">Imprimante</div>
<div class="box" style="left:488px;top:516px"></div>
<div class="t" style="left:503px;top:516px;transform:scaleX(1.04)">Ajouter un tampon</div>

<!-- bottom button bar -->
<div class="a" style="left:2px;top:558px;width:800px;height:1px;background:#fff"></div>
<div class="a" style="left:2px;top:558px;width:1px;height:38px;background:#fff"></div>
<div class="a" style="left:801px;top:558px;width:1px;height:38px;background:#696969"></div>
<div class="a" style="left:0;top:596px;width:802px;height:1px;background:#555"></div>
<div class="a" style="left:0;top:597px;width:802px;height:1px;background:#1a1a1a"></div>
<div class="cb" style="left:411px;top:565px;width:203px;height:21px"></div>
<div class="t" style="left:441px;top:569px;transform:scaleX(0.99)">Appliquer à la présentation</div>
<div class="cb" style="left:624px;top:565px;width:79px;height:21px"></div>
<div class="t" style="left:639px;top:569px;transform:scaleX(1.05)">Imprimer</div>
<div class="cb" style="left:711px;top:565px;width:81px;height:21px"></div>
<div class="t" style="left:733px;top:569px;transform:scaleX(0.95)">Fermer</div>
</body></html>
